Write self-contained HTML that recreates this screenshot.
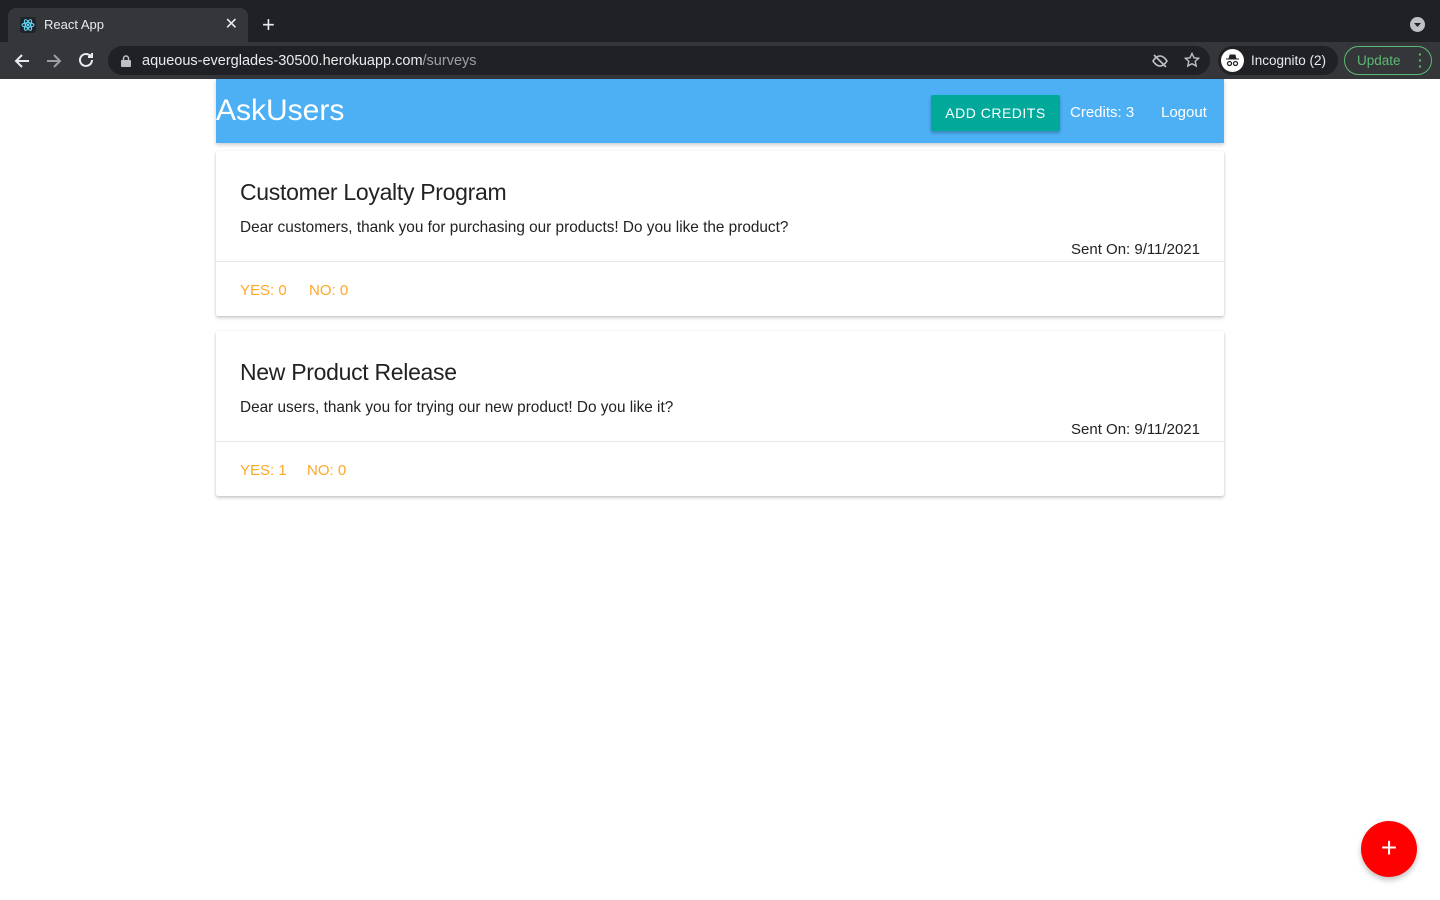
<!DOCTYPE html>
<html><head><meta charset="utf-8"><style>
*{box-sizing:border-box;margin:0;padding:0}
body{width:1440px;height:900px;overflow:hidden;background:#fff;font-family:"Liberation Sans",sans-serif;position:relative}
.chrome{position:absolute;left:0;top:0;width:1440px;height:79px;background:#202124}
.tab{position:absolute;left:8px;top:8px;width:240px;height:34px;background:#35363a;border-radius:8px 8px 0 0}
.tab .t{position:absolute;left:36px;top:9px;color:#e8eaed;font-size:13px}
.tab .x{position:absolute;right:10px;top:6px;color:#e8eaed;font-size:16px}
.plus{position:absolute;left:262px;top:14px;color:#e8eaed;font-size:22px;line-height:1}
.bar{position:absolute;left:0;top:42px;width:1440px;height:37px;background:#35363a}
.url{position:absolute;left:108px;top:4px;width:1102px;height:29px;background:#202124;border-radius:15px}
.url .u{position:absolute;left:34px;top:7px;color:#e8eaed;font-size:14.5px}
.url .u span{color:#9aa0a6}
.inc{position:absolute;left:1218px;top:4px;width:120px;height:29px;background:#202124;border-radius:15px;color:#e8eaed;font-size:13.5px}
.upd{position:absolute;left:1344px;top:4px;width:88px;height:29px;border:1.5px solid #5bb974;border-radius:15px;color:#5bb974;font-size:13.5px}
nav{position:absolute;left:216px;top:79px;width:1008px;height:64px;background:#4db0f5;box-shadow:0 2px 4px rgba(0,0,0,.2)}
.logo{position:absolute;left:0;top:15px;color:#fff;font-size:30px}
.btn{position:absolute;left:715px;top:16px;width:129px;height:36px;background:#00a99a;color:#fff;font-size:14px;letter-spacing:.5px;text-align:center;line-height:36px;border-radius:2px;box-shadow:0 2px 3px rgba(0,0,0,.25)}
.nl{position:absolute;top:25px;color:#fff;font-size:15px}
.card{position:absolute;left:216px;width:1008px;height:165px;background:#fff;box-shadow:0 2px 3px rgba(0,0,0,.2),0 0 1px rgba(0,0,0,.15);border-radius:2px}
.card h2{position:absolute;left:24px;top:28px;font-weight:300;font-size:23px;letter-spacing:-0.3px;color:#222}
.card p{position:absolute;left:24px;top:68px;font-size:15.35px;color:#222}
.card .d{position:absolute;right:24px;top:90px;font-size:15px;color:#222}
.card .hr{position:absolute;left:0;right:0;top:110px;border-top:1px solid #e6e6e6}
.card .a{position:absolute;top:131px;font-size:15px;color:#ffa726}
.fab{position:absolute;left:1361px;top:821px;width:56px;height:56px;border-radius:50%;background:#f00;box-shadow:0 3px 6px rgba(0,0,0,.25);color:#fff;text-align:center;font-size:28px;line-height:54px}
</style></head><body>
<div class="chrome">
<div class="tab"><svg style="position:absolute;left:12px;top:9px" width="16" height="16" viewBox="0 0 16 16"><rect width="16" height="16" rx="3" fill="#20232a"/><g fill="none" stroke="#61dafb" stroke-width="1"><ellipse cx="8" cy="8" rx="6" ry="2.3"/><ellipse cx="8" cy="8" rx="6" ry="2.3" transform="rotate(60 8 8)"/><ellipse cx="8" cy="8" rx="6" ry="2.3" transform="rotate(-60 8 8)"/></g><circle cx="8" cy="8" r="1.2" fill="#61dafb"/></svg><span class="t">React App</span><span class="x">✕</span></div>
<div class="plus">+</div>
<svg style="position:absolute;left:1410px;top:17px" width="15" height="15"><circle cx="7.5" cy="7.5" r="7.5" fill="#bdc1c6"/><path d="M4 6h7l-3.5 4z" fill="#202124"/></svg>
<div class="bar">
<svg style="position:absolute;left:12px;top:9px" width="20" height="20" viewBox="0 0 20 20" fill="none" stroke="#e8eaed" stroke-width="2"><path d="M17 10H4M10 4l-6 6 6 6"/></svg>
<svg style="position:absolute;left:44px;top:9px" width="20" height="20" viewBox="0 0 20 20" fill="none" stroke="#9aa0a6" stroke-width="2"><path d="M3 10h13M10 4l6 6-6 6"/></svg>
<svg style="position:absolute;left:77px;top:9px" width="18" height="18" viewBox="0 0 18 18" fill="none" stroke="#e8eaed" stroke-width="2"><path d="M15 9a6 6 0 1 1-2-4.5"/><path d="M15 2v4h-4" fill="#e8eaed"/></svg>
<div class="url"><svg style="position:absolute;left:13px;top:9px" width="10" height="12"><rect x="0" y="5" width="10" height="7" rx="1" fill="#bdc1c6"/><path d="M2.5 5V3.5a2.5 2.5 0 0 1 5 0V5" fill="none" stroke="#bdc1c6" stroke-width="1.5"/></svg><span class="u">aqueous-everglades-30500.herokuapp.com<span>/surveys</span></span>
<svg style="position:absolute;left:1044px;top:7px" width="16" height="16" viewBox="0 0 16 16" fill="none" stroke="#bdc1c6" stroke-width="1.6"><path d="M1 8s3-5 7-5 7 5 7 5-3 5-7 5-7-5-7-5z"/><path d="M2 2l12 12"/></svg>
<svg style="position:absolute;left:1076px;top:6px" width="16" height="16" viewBox="0 0 16 16" fill="none" stroke="#bdc1c6" stroke-width="1.4"><path d="M8 1.5l2 4.3 4.6.5-3.4 3.1 1 4.6L8 11.7 3.8 14l1-4.6L1.4 6.3 6 5.8z"/></svg>
</div>
<div class="inc"><svg style="position:absolute;left:3px;top:3px" width="23" height="23" viewBox="0 0 23 23"><circle cx="11.5" cy="11.5" r="11.5" fill="#fff"/><path d="M5 10h13M8 10l1-4h5l1 4" fill="#202124" stroke="#202124"/><circle cx="8.5" cy="14.5" r="2" fill="none" stroke="#202124" stroke-width="1.3"/><circle cx="14.5" cy="14.5" r="2" fill="none" stroke="#202124" stroke-width="1.3"/></svg><span style="position:absolute;left:33px;top:7px">Incognito (2)</span></div>
<div class="upd"><span style="position:absolute;left:12px;top:6px">Update</span><span style="position:absolute;right:10px;top:4px;font-weight:bold;font-size:14px;line-height:6px;width:3px">·<br>·<br>·</span></div>
</div>
</div>
<nav><span class="logo">AskUsers</span><div class="btn">ADD CREDITS</div><span class="nl" style="left:854px">Credits: 3</span><span class="nl" style="left:945px">Logout</span></nav>
<div class="card" style="top:151px"><h2>Customer Loyalty Program</h2><p>Dear customers, thank you for purchasing our products! Do you like the product?</p><span class="d">Sent On: 9/11/2021</span><div class="hr"></div><span class="a" style="left:24px">YES: 0</span><span class="a" style="left:93px">NO: 0</span></div>
<div class="card" style="top:331px"><h2>New Product Release</h2><p>Dear users, thank you for trying our new product! Do you like it?</p><span class="d">Sent On: 9/11/2021</span><div class="hr"></div><span class="a" style="left:24px">YES: 1</span><span class="a" style="left:91px">NO: 0</span></div>
<div class="fab">+</div>
</body></html>
